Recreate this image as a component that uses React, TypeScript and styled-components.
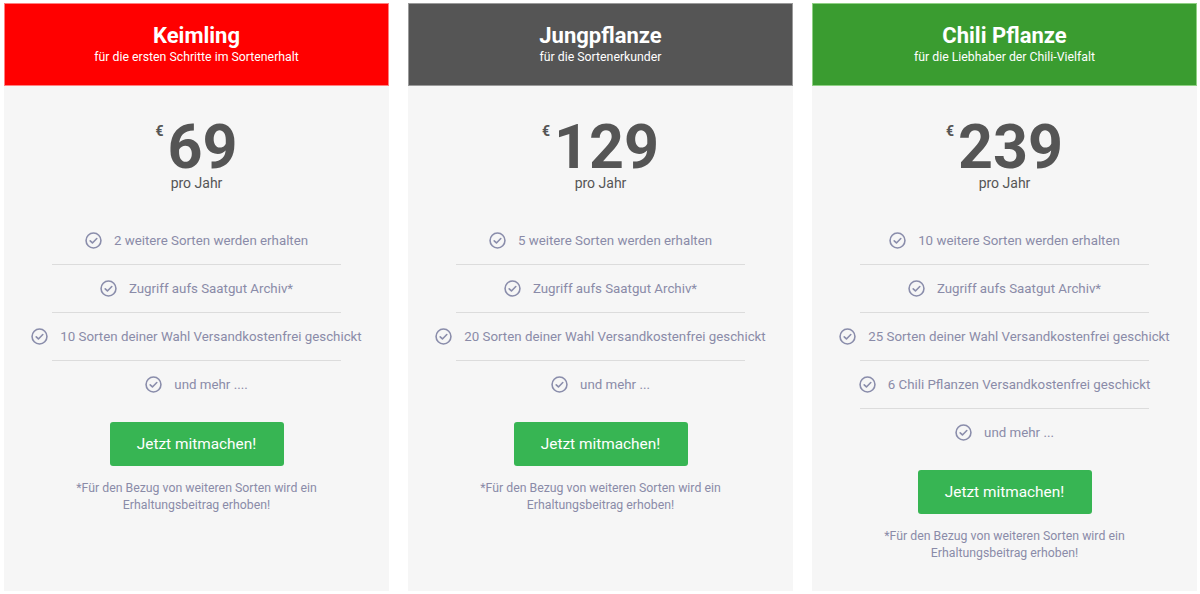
import styled, { createGlobalStyle } from "styled-components";

const GlobalStyle = createGlobalStyle`
  body {
    margin: 0;
    background: #fff;
    font-family: Roboto, "Liberation Sans", sans-serif;
  }
`;

type Plan = {
  name: string;
  tagline: string;
  color: string;
  border: string;
  price: string;
  features: string[];
};

const plans: Plan[] = [
  {
    name: "Keimling",
    tagline: "für die ersten Schritte im Sortenerhalt",
    color: "#ff0000",
    border: "#ff8080",
    price: "69",
    features: [
      "2 weitere Sorten werden erhalten",
      "Zugriff aufs Saatgut Archiv*",
      "10 Sorten deiner Wahl Versandkostenfrei geschickt",
      "und mehr ....",
    ],
  },
  {
    name: "Jungpflanze",
    tagline: "für die Sortenerkunder",
    color: "#555555",
    border: "#9a9a9a",
    price: "129",
    features: [
      "5 weitere Sorten werden erhalten",
      "Zugriff aufs Saatgut Archiv*",
      "20 Sorten deiner Wahl Versandkostenfrei geschickt",
      "und mehr ...",
    ],
  },
  {
    name: "Chili Pflanze",
    tagline: "für die Liebhaber der Chili-Vielfalt",
    color: "#3a9c30",
    border: "#8fd084",
    price: "239",
    features: [
      "10 weitere Sorten werden erhalten",
      "Zugriff aufs Saatgut Archiv*",
      "25 Sorten deiner Wahl Versandkostenfrei geschickt",
      "6 Chili Pflanzen Versandkostenfrei geschickt",
      "und mehr ...",
    ],
  },
];

const CheckIcon = () => (
  <svg width="17" height="17" viewBox="0 0 16 16" fill="none">
    <circle cx="8" cy="8" r="7" stroke="#8a8dab" strokeWidth="1.5" />
    <path
      d="M4.9 8.3 L7 10.3 L11.1 6.1"
      stroke="#8a8dab"
      strokeWidth="1.5"
      strokeLinecap="round"
      strokeLinejoin="round"
    />
  </svg>
);

const App = () => {
  return (
    <>
      <GlobalStyle />
      <Page>
        {plans.map((plan) => (
          <Card key={plan.name}>
            <Header $bg={plan.color} $border={plan.border}>
              <Title>{plan.name}</Title>
              <Tagline>{plan.tagline}</Tagline>
            </Header>
            <Body>
              <Price>
                <Currency>€</Currency>
                <Amount>{plan.price}</Amount>
              </Price>
              <Period>pro Jahr</Period>
              <Features>
                {plan.features.map((f) => (
                  <Feature key={f}>
                    <CheckIcon />
                    <span>{f}</span>
                  </Feature>
                ))}
              </Features>
              <JoinButton>Jetzt mitmachen!</JoinButton>
              <Note>
                *Für den Bezug von weiteren Sorten wird ein
                <br />
                Erhaltungsbeitrag erhoben!
              </Note>
            </Body>
          </Card>
        ))}
      </Page>
    </>
  );
};

const Page = styled.div`
  display: flex;
  gap: 19px;
  padding: 3px 3px 0 4px;
  height: 591px;
  box-sizing: border-box;
  align-items: stretch;
`;

const Card = styled.div`
  width: 385px;
  flex: 0 0 385px;
  display: flex;
  flex-direction: column;
  background: #f6f6f6;
`;

const Header = styled.div<{ $bg: string; $border: string }>`
  height: 83px;
  box-sizing: border-box;
  background: ${(p) => p.$bg};
  border: 1px solid ${(p) => p.$border};
  color: #fff;
  text-align: center;
  padding-top: 19px;
`;

const Title = styled.div`
  font-size: 22px;
  font-weight: 700;
  line-height: 26px;
`;

const Tagline = styled.div`
  font-size: 12.3px;
  line-height: 14px;
  margin-top: 1px;
`;

const Body = styled.div`
  flex: 1;
  display: flex;
  flex-direction: column;
  align-items: center;
  padding-top: 37px;
`;

const Price = styled.div`
  display: flex;
  align-items: flex-start;
  color: #555;
  font-weight: 700;
`;

const Currency = styled.span`
  font-size: 14px;
  line-height: 14px;
  margin-top: 1px;
  margin-right: 4px;
`;

const Amount = styled.span`
  font-size: 61px;
  line-height: 48px;
`;

const Period = styled.div`
  color: #555;
  font-size: 14px;
  line-height: 17px;
  margin-top: 3.5px;
`;

const Features = styled.ul`
  list-style: none;
  margin: 25.5px 0 0;
  padding: 0;
  width: 289px;
`;

const Feature = styled.li`
  height: 48px;
  box-sizing: border-box;
  border-bottom: 1px solid #dcdcdc;
  display: flex;
  align-items: center;
  justify-content: center;
  gap: 12px;
  white-space: nowrap;
  color: #8a8ba8;
  font-size: 13.3px;
  padding-bottom: 1px;

  &:last-child {
    border-bottom-color: transparent;
  }

  svg {
    flex: none;
  }
`;

const JoinButton = styled.button`
  margin-top: 12.5px;
  width: 174px;
  height: 44px;
  border: none;
  border-radius: 3px;
  background: #37b553;
  color: #fff;
  font-family: inherit;
  font-size: 15.4px;
  cursor: pointer;
`;

const Note = styled.p`
  margin: 14px 0 0;
  text-align: center;
  color: #8a8ba8;
  font-size: 12.3px;
  line-height: 17px;
`;

export default App;
